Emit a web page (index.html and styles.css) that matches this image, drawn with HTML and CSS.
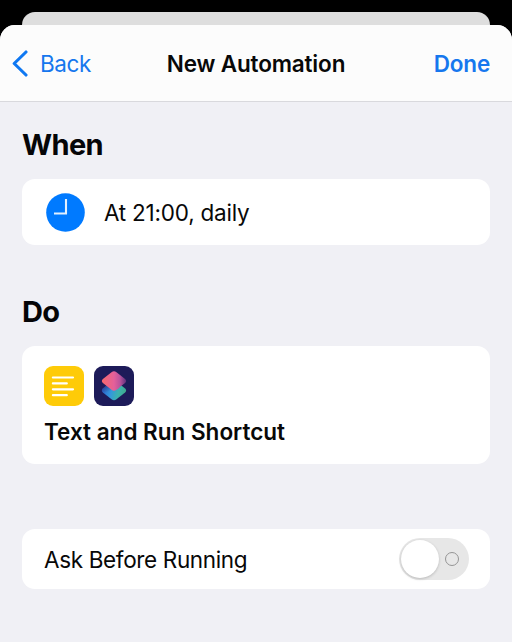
FILE: index.html
```html
<!DOCTYPE html>
<html lang="en">
<head>
<meta charset="utf-8">
<title>New Automation</title>
<link rel="stylesheet" href="styles.css">
</head>
<body>
<div class="behind"></div>
<main class="sheet">
  <header class="nav">
    <a class="back">
      <svg class="chevron" width="16" height="27" viewBox="0 0 16 27"><path d="M14 2 2.2 13.5 14 25" fill="none" stroke="#0f78f2" stroke-width="3.1" stroke-linecap="round" stroke-linejoin="round"/></svg>
      <span class="back-label">Back</span>
    </a>
    <h1 class="title"><span>New Automation</span></h1>
    <a class="done"><span>Done</span></a>
  </header>
  <section class="content">
    <h2 class="heading"><span>When</span></h2>
    <div class="card when-card">
      <svg width="39" height="39" viewBox="0 0 39 39"><circle cx="19.5" cy="19.5" r="19.3" fill="#007aff"/><path d="M20 6V20.5H8" fill="none" stroke="#e2f0ff" stroke-width="2.1"/></svg>
      <span class="when-text">At 21:00, daily</span>
    </div>
    <h2 class="heading do-heading"><span>Do</span></h2>
    <div class="card do-card">
      <div class="icons">
        <svg width="40" height="40" viewBox="0 0 40 40"><rect width="40" height="40" rx="9" fill="#fecb08"/><path d="M8.9 11.5H29M8.9 17.4H22.8M8.9 23.3H29M8.9 29.2H22.8" stroke="#fff" stroke-width="2.2" stroke-linecap="round"/></svg>
        <svg width="40" height="40" viewBox="0 0 40 40">
          <defs>
            <linearGradient id="low" x1="0" y1="0.4" x2="1" y2="0.6"><stop offset="0" stop-color="#2b62cf"/><stop offset=".4" stop-color="#3398dc"/><stop offset=".7" stop-color="#3cb3ad"/><stop offset="1" stop-color="#3fa98c"/></linearGradient>
            <linearGradient id="high" x1="0" y1="0.5" x2="1" y2="0.5"><stop offset="0" stop-color="#f7696c"/><stop offset=".5" stop-color="#e4609a"/><stop offset=".75" stop-color="#b8539d"/><stop offset="1" stop-color="#5f2f7b"/></linearGradient>
            <linearGradient id="shade" gradientUnits="userSpaceOnUse" x1="10" y1="17" x2="14" y2="26"><stop offset=".2" stop-color="#29256f" stop-opacity=".75"/><stop offset="1" stop-color="#29366f" stop-opacity="0"/></linearGradient>
          </defs>
          <rect width="40" height="40" rx="9" fill="#1d1b59"/>
          <path d="M17.5 15.4q2.5-1.9 5 0l8.6 7q2.1 2 0 4L22.5 33.2q-2.5 1.9-5 0L8.9 26.4q-2.1-2 0-4Z" fill="url(#low)"/>
          <path d="M17.5 15.4q2.5-1.9 5 0l8.6 7q2.1 2 0 4L22.5 33.2q-2.5 1.9-5 0L8.9 26.4q-2.1-2 0-4Z" fill="url(#shade)"/>
          <path d="M17.5 6.2q2.5-1.9 5 0l8.6 6.8q2.1 2 0 4L26.5 20.6 24.5 22.4 22.5 23.8q-2.5 1.9-5 0L8.9 17q-2.1-2 0-4Z" fill="url(#high)"/>
        </svg>
      </div>
      <div class="do-text"><span>Text and Run Shortcut</span></div>
    </div>
    <div class="card ask-card">
      <span class="ask-text">Ask Before Running</span>
      <div class="switch"><div class="knob"></div><div class="off-mark"></div></div>
    </div>
  </section>
</main>
</body>
</html>
```
FILE: styles.css
```css
* { box-sizing: border-box; }
body {
  margin: 0;
  height: 642px;
  padding-top: 12px;
  overflow: hidden;
  background: #000;
  color: #080808;
  font-family: Inter, "Liberation Sans", sans-serif;
  font-size: 22.5px;
  line-height: 28px;
  white-space: nowrap;
}
.behind {
  height: 26px;
  margin: 0 22px -13px;
  border-radius: 13px 13px 0 0;
  background: #dedede;
}
.sheet {
  position: relative;
  height: 617px;
  border-radius: 15px 15px 0 0;
  background: #f0f0f5;
  overflow: hidden;
}
.nav {
  display: grid;
  grid-template-columns: 155px 1fr 155px;
  align-items: center;
  height: 77px;
  padding-top: 1px;
  border-bottom: 1px solid #d9d9dd;
  background: #fcfcfc;
}
.back, .done { color: #1677ee; }
.back {
  display: flex;
  align-items: center;
  gap: 12px;
  padding-left: 12px;
}
.back-label { letter-spacing: -0.4px; }
.title {
  margin: 0;
  text-align: center;
  font-size: 22.5px;
  font-weight: 600;
  letter-spacing: -0.15px;
}
.done {
  padding-right: 22px;
  text-align: right;
  font-weight: 600;
  letter-spacing: -0.2px;
}
.content { padding: 25px 22px 0; }
.heading {
  margin: 0 0 16px;
  color: #050507;
  font-size: 29px;
  font-weight: 700;
  line-height: 36px;
  letter-spacing: -0.6px;
}
.card {
  border-radius: 13px;
  background: #fff;
}
.when-card {
  display: flex;
  align-items: center;
  gap: 19px;
  height: 66px;
  padding: 1px 0 0 24px;
}
.when-text { letter-spacing: -0.22px; }
.do-heading { margin-top: 49px; margin-bottom: 16px; }
.do-card {
  height: 118px;
  padding: 20px 22px;
}
.icons {
  display: flex;
  gap: 10px;
  height: 40px;
}
.do-text {
  margin-top: 12px;
  font-weight: 600;
  letter-spacing: 0;
}
.ask-card {
  display: flex;
  align-items: center;
  justify-content: space-between;
  height: 60px;
  margin-top: 65px;
  padding: 0 21px 0 22px;
}
.ask-text {
  padding-top: 2px;
  letter-spacing: -0.35px;
}
.switch {
  display: flex;
  align-items: center;
  gap: 6px;
  width: 70px;
  height: 42px;
  padding-left: 2px;
  border-radius: 21px;
  background: #e7e7e7;
}
.knob {
  width: 38px;
  height: 38px;
  border-radius: 50%;
  background: #fff;
  box-shadow: 0 1px 3px rgba(0, 0, 0, 0.2);
}
.off-mark {
  width: 14px;
  height: 14px;
  border: 1px solid #959595;
  border-radius: 50%;
}
```
